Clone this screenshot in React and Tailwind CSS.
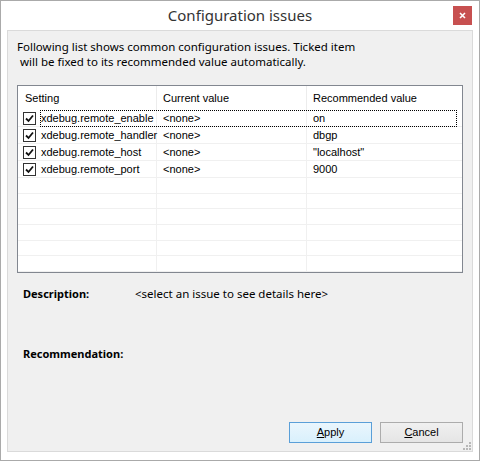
import React from 'react';

const ui = { fontFamily: '"Noto Sans", "Open Sans", sans-serif' };
const classic = { fontFamily: '"Liberation Sans", Arial, sans-serif' };

const issues = [
  { name: 'xdebug.remote_enable', current: '<none>', recommended: 'on' },
  { name: 'xdebug.remote_handler', current: '<none>', recommended: 'dbgp' },
  { name: 'xdebug.remote_host', current: '<none>', recommended: '"localhost"' },
  { name: 'xdebug.remote_port', current: '<none>', recommended: '9000' },
];

const Check = () => (
  <span className="w-[13px] h-[13px] border border-[#333] bg-white flex items-center justify-center shrink-0">
    <svg width="9" height="9" viewBox="0 0 9 9">
      <path d="M1 4.5 L3.5 7 L8 1.5" fill="none" stroke="#111" strokeWidth="1.8" />
    </svg>
  </span>
);

const Row = ({ item, focused }) => (
  <div className="relative grid grid-cols-[139px_150px_1fr] h-[17px] border-b border-[#f0f0f0] text-[11px] text-black">
    <div className="flex items-center pl-[5px] gap-[5px] border-r border-[#f0f0f0]">
      {item && <Check />}
      {item && <span className="whitespace-nowrap">{item.name}</span>}
    </div>
    <div className="flex items-center pl-[6px] border-r border-[#f0f0f0]">{item && item.current}</div>
    <div className="flex items-center pl-[6px]">{item && item.recommended}</div>
    {focused && (
      <div className="absolute left-[22px] right-[5px] top-0 bottom-[-1px] border border-dotted border-black" />
    )}
  </div>
);

export default function App() {
  const empty = Array.from({ length: 6 });

  return (
    <div className="w-[480px] h-[461px] bg-white border border-[#aaaaaa] flex flex-col" style={ui}>
      <div className="h-[29px] relative flex items-center justify-center shrink-0">
        <span className="text-[15px] text-[#333] leading-none">Configuration issues</span>
        <div className="absolute right-[7px] top-[5px] w-[19px] h-[19px] bg-[#c75050] flex items-center justify-center">
          <svg width="7" height="7" viewBox="0 0 7 7">
            <path d="M1 1 L6 6 M6 1 L1 6" stroke="#fff" strokeWidth="1.6" />
          </svg>
        </div>
      </div>

      <div className="relative mx-[6px] mb-[8px] flex-1 border border-[#dadada] bg-[#f0f0f0] flex flex-col px-[9px] pt-[8px]">
        <p className="text-[11.5px] leading-[15px] text-black whitespace-pre">
          {'Following list shows common configuration issues. Ticked item\n will be fixed to its recommended value automatically.'}
        </p>

        <div className="mt-[16px] h-[188px] border border-[#828790] bg-white overflow-hidden flex flex-col" style={classic}>
          <div className="grid grid-cols-[139px_150px_1fr] h-[24px] shrink-0 text-[11px] text-black">
            <div className="flex items-center pl-[7px] border-r border-[#ececec]">Setting</div>
            <div className="flex items-center pl-[6px] border-r border-[#ececec]">Current value</div>
            <div className="flex items-center pl-[6px]">Recommended value</div>
          </div>
          {issues.map((it, i) => (
            <Row key={it.name} item={it} focused={i === 0} />
          ))}
          {empty.map((_, i) => (
            <Row key={'e' + i} />
          ))}
        </div>

        <div className="mt-[13px] flex text-[11.5px] leading-[15px] text-black pl-[6px]">
          <span className="w-[112px] text-[11px] font-bold">Description:</span>
          <span>&lt;select an issue to see details here&gt;</span>
        </div>
        <div className="mt-[45px] flex text-[11px] leading-[15px] text-black pl-[6px]">
          <span className="font-bold">Recommendation:</span>
        </div>

        <div className="mt-auto mb-[8px] flex justify-end gap-[8px] text-[11px] text-black" style={classic}>
          <button className="w-[83px] h-[21px] border border-[#5a9fd8] bg-gradient-to-b from-[#eaf6fd] to-[#d9f0fc] flex items-center justify-center">
            <span><span className="underline">A</span>pply</span>
          </button>
          <button className="w-[83px] h-[21px] border border-[#acacac] bg-gradient-to-b from-[#f0f0f0] to-[#e5e5e5] flex items-center justify-center">
            <span><span className="underline">C</span>ancel</span>
          </button>
        </div>

        <svg className="absolute right-[1px] bottom-[1px]" width="8" height="8" viewBox="0 0 8 8">
          <rect x="6" y="0" width="2" height="2" fill="#b8b8b8" />
          <rect x="3" y="3" width="2" height="2" fill="#b8b8b8" />
          <rect x="6" y="3" width="2" height="2" fill="#b8b8b8" />
          <rect x="0" y="6" width="2" height="2" fill="#b8b8b8" />
          <rect x="3" y="6" width="2" height="2" fill="#b8b8b8" />
          <rect x="6" y="6" width="2" height="2" fill="#b8b8b8" />
        </svg>
      </div>
    </div>
  );
}
